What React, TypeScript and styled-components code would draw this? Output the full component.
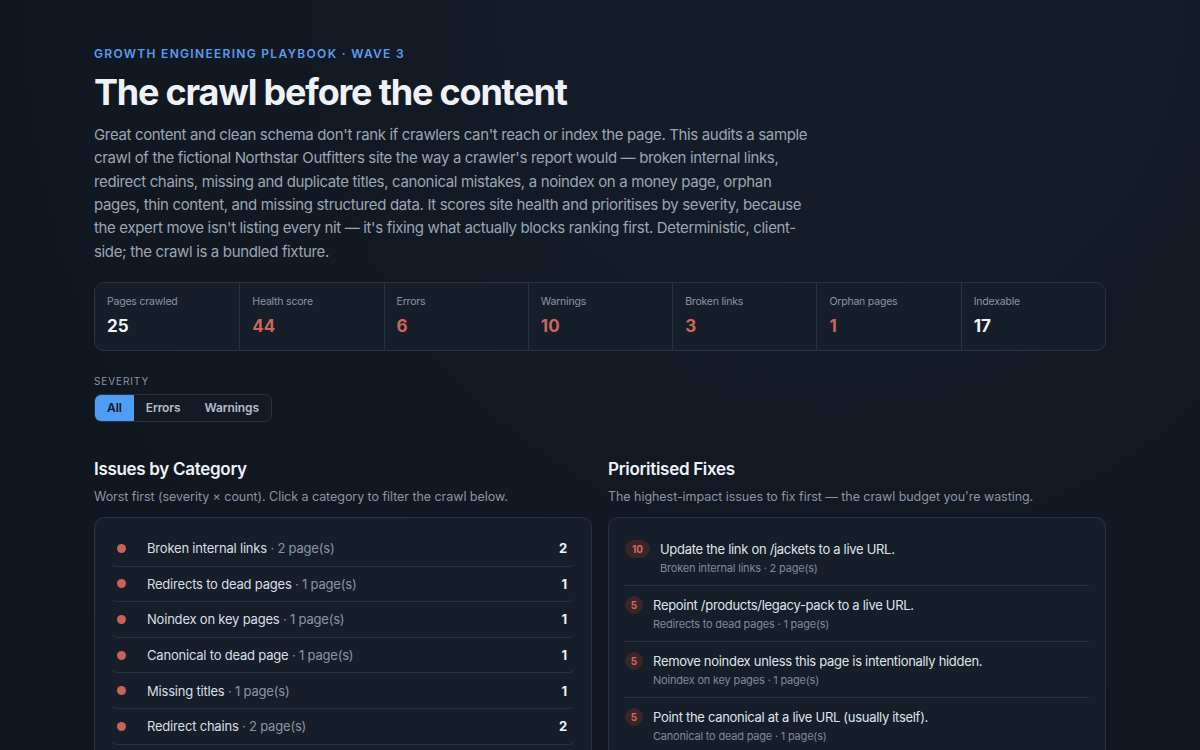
import React from "react";
import styled, { createGlobalStyle } from "styled-components";

const GlobalStyle = createGlobalStyle`
  * { box-sizing: border-box; }
  html, body {
    margin: 0;
    padding: 0;
    background: #111821;
  }
  body {
    font-family: Inter, "Noto Sans", "Liberation Sans", sans-serif;
    color: #e6ebf1;
    letter-spacing: -0.2px;
    -webkit-font-smoothing: antialiased;
  }
`;

const Page = styled.div`
  min-height: 100vh;
  background: radial-gradient(ellipse at 70% 0%, #151e2a 0%, #121923 45%, #0f151d 100%);
  padding: 46px 0 40px;
`;

const Container = styled.div`
  width: 1012px;
  margin: 0 auto;
`;

const Eyebrow = styled.div`
  font-size: 12px;
  font-weight: 600;
  letter-spacing: 1.3px;
  text-transform: uppercase;
  color: #5a9df0;
`;

const Title = styled.h1`
  margin: 10px 0 0;
  font-size: 36px;
  font-weight: 700;
  letter-spacing: -1.2px;
  line-height: 1.2;
  color: #eef2f7;
`;

const Lede = styled.p`
  margin: 9px 0 0;
  max-width: 726px;
  font-size: 15px;
  line-height: 23.3px;
  letter-spacing: -0.35px;
  color: #9ba6b4;
`;

const Stats = styled.div`
  margin-top: 19px;
  display: grid;
  grid-template-columns: repeat(7, 1fr);
  border: 1px solid #29333f;
  border-radius: 10px;
  background: #161e29;
  overflow: hidden;
`;

const Stat = styled.div`
  padding: 12px 12px 14px;
  border-left: 1px solid #29333f;
  &:first-child { border-left: none; }
`;

const StatLabel = styled.div`
  font-size: 10.5px;
  color: #8a95a4;
`;

const StatValue = styled.div<{ $bad?: boolean }>`
  margin-top: 8px;
  font-size: 17px;
  font-weight: 700;
  letter-spacing: 0;
  color: ${(p) => (p.$bad ? "#c9665d" : "#f1f4f8")};
`;

const FilterLabel = styled.div`
  margin-top: 24px;
  font-size: 10px;
  letter-spacing: 0.9px;
  text-transform: uppercase;
  color: #8a95a4;
`;

const Segmented = styled.div`
  margin-top: 7px;
  display: inline-flex;
  border: 1px solid #29333f;
  border-radius: 7px;
  overflow: hidden;
  background: #131a24;
`;

const SegButton = styled.button<{ $active?: boolean }>`
  border: none;
  font-family: inherit;
  font-size: 12px;
  font-weight: 600;
  letter-spacing: -0.1px;
  height: 26px;
  padding: 0 12px;
  cursor: pointer;
  background: ${(p) => (p.$active ? "#4f9ef5" : "transparent")};
  color: ${(p) => (p.$active ? "#0e1620" : "#b3bcc8")};
`;

const Columns = styled.div`
  margin-top: 37px;
  display: grid;
  grid-template-columns: 1fr 1fr;
  gap: 16px;
`;

const Section = styled.section``;

const SectionTitle = styled.h2`
  margin: 0;
  font-size: 17px;
  font-weight: 600;
  letter-spacing: -0.3px;
  color: #eef2f7;
`;

const SectionSub = styled.div`
  margin-top: 10px;
  font-size: 12.5px;
  letter-spacing: -0.05px;
  color: #8a95a4;
`;

const Card = styled.div`
  margin-top: 13px;
  border: 1px solid #29333f;
  border-radius: 10px;
  background: #161e29;
  padding: 13px 16px;
`;

const CatRow = styled.div`
  display: flex;
  align-items: center;
  height: 35.6px;
  padding: 0 8px 0 6px;
  border-bottom: 1px solid #27313d;
  border-radius: 0 0 6px 6px;
`;

const Dot = styled.span`
  width: 9px;
  height: 9px;
  border-radius: 50%;
  background: #c7645a;
  flex: none;
`;

const CatName = styled.span`
  margin-left: 21px;
  flex: 1;
  font-size: 13px;
  color: #d9dfe7;
`;

const Muted = styled.span`
  color: #8a95a4;
`;

const Count = styled.span`
  font-size: 13px;
  font-weight: 700;
  color: #f1f4f8;
`;

const FixItem = styled.div`
  display: flex;
  align-items: flex-start;
  padding: 10px 0 10px;
  border-bottom: 1px solid #29333f;
  &:first-child { padding-top: 9px; }
  &:last-child { border-bottom: none; }
`;

const Badge = styled.span<{ $wide?: boolean }>`
  flex: none;
  height: 18px;
  min-width: ${(p) => (p.$wide ? "25px" : "18px")};
  padding: 0 ${(p) => (p.$wide ? "5px" : "0")};
  border-radius: 9px;
  background: #3a2529;
  color: #d86a5e;
  font-size: 10px;
  font-weight: 700;
  letter-spacing: 0;
  display: inline-flex;
  align-items: center;
  justify-content: center;
`;

const FixBody = styled.div`
  margin-left: 10px;
`;

const FixTitle = styled.div`
  font-size: 13px;
  line-height: 18px;
  letter-spacing: -0.3px;
  color: #dfe4eb;
`;

const FixSub = styled.div`
  margin-top: 3px;
  font-size: 11px;
  color: #7f8a98;
`;

const stats = [
  { label: "Pages crawled", value: "25" },
  { label: "Health score", value: "44", bad: true },
  { label: "Errors", value: "6", bad: true },
  { label: "Warnings", value: "10", bad: true },
  { label: "Broken links", value: "3", bad: true },
  { label: "Orphan pages", value: "1", bad: true },
  { label: "Indexable", value: "17" },
];

const categories = [
  { name: "Broken internal links", pages: 2 },
  { name: "Redirects to dead pages", pages: 1 },
  { name: "Noindex on key pages", pages: 1 },
  { name: "Canonical to dead page", pages: 1 },
  { name: "Missing titles", pages: 1 },
  { name: "Redirect chains", pages: 2 },
  { name: "Duplicate titles", pages: 2 },
];

const fixes = [
  { score: 10, title: "Update the link on /jackets to a live URL.", cat: "Broken internal links", pages: 2 },
  { score: 5, title: "Repoint /products/legacy-pack to a live URL.", cat: "Redirects to dead pages", pages: 1 },
  { score: 5, title: "Remove noindex unless this page is intentionally hidden.", cat: "Noindex on key pages", pages: 1 },
  { score: 5, title: "Point the canonical at a live URL (usually itself).", cat: "Canonical to dead page", pages: 1 },
  { score: 5, title: "Write a unique, descriptive title for this page.", cat: "Missing titles", pages: 1 },
];

export default function App() {
  return (
    <>
      <GlobalStyle />
      <Page>
        <Container>
          <Eyebrow>Growth Engineering Playbook · Wave 3</Eyebrow>
          <Title>The crawl before the content</Title>
          <Lede>
            Great content and clean schema don't rank if crawlers can't reach or index the page. This
            audits a sample crawl of the fictional Northstar Outfitters site the way a crawler's report
            would — broken internal links, redirect chains, missing and duplicate titles, canonical
            mistakes, a noindex on a money page, orphan pages, thin content, and missing structured
            data. It scores site health and prioritises by severity, because the expert move isn't
            listing every nit — it's fixing what actually blocks ranking first. Deterministic,
            client-side; the crawl is a bundled fixture.
          </Lede>

          <Stats>
            {stats.map((s) => (
              <Stat key={s.label}>
                <StatLabel>{s.label}</StatLabel>
                <StatValue $bad={s.bad}>{s.value}</StatValue>
              </Stat>
            ))}
          </Stats>

          <FilterLabel>Severity</FilterLabel>
          <Segmented>
            <SegButton $active>All</SegButton>
            <SegButton>Errors</SegButton>
            <SegButton>Warnings</SegButton>
          </Segmented>

          <Columns>
            <Section>
              <SectionTitle>Issues by Category</SectionTitle>
              <SectionSub>Worst first (severity × count). Click a category to filter the crawl below.</SectionSub>
              <Card>
                {categories.map((c) => (
                  <CatRow key={c.name}>
                    <Dot />
                    <CatName>
                      {c.name} <Muted>· {c.pages} page(s)</Muted>
                    </CatName>
                    <Count>{c.pages}</Count>
                  </CatRow>
                ))}
              </Card>
            </Section>

            <Section>
              <SectionTitle>Prioritised Fixes</SectionTitle>
              <SectionSub>The highest-impact issues to fix first — the crawl budget you're wasting.</SectionSub>
              <Card>
                {fixes.map((f) => (
                  <FixItem key={f.title}>
                    <Badge $wide={f.score >= 10}>{f.score}</Badge>
                    <FixBody>
                      <FixTitle>{f.title}</FixTitle>
                      <FixSub>
                        {f.cat} · {f.pages} page(s)
                      </FixSub>
                    </FixBody>
                  </FixItem>
                ))}
              </Card>
            </Section>
          </Columns>
        </Container>
      </Page>
    </>
  );
}
